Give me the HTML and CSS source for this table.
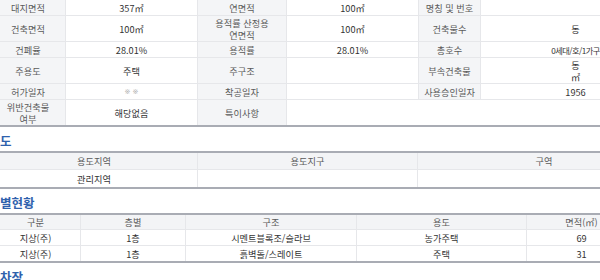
FILE: index.html
```html
<!DOCTYPE html>
<html lang="ko">
<head>
<meta charset="utf-8">
<title>건축물 정보</title>
<link rel="stylesheet" href="styles.css">
</head>
<body>
<div class="page">
  <table class="info">
    <colgroup>
      <col class="c-l1"><col class="c-v1"><col class="c-l2"><col class="c-v2"><col class="c-l3"><col class="c-v3">
    </colgroup>
    <tbody>
      <tr>
        <th>대지면적</th><td>357㎡</td>
        <th>연면적</th><td>100㎡</td>
        <th>명칭 및 번호</th><td></td>
      </tr>
      <tr>
        <th>건축면적</th><td>100㎡</td>
        <th>용적률 산정용<br>연면적</th><td>100㎡</td>
        <th>건축물수</th><td>동</td>
      </tr>
      <tr>
        <th>건폐율</th><td>28.01%</td>
        <th>용적률</th><td>28.01%</td>
        <th>총호수</th><td class="tight">0세대/호/1가구</td>
      </tr>
      <tr>
        <th>주용도</th><td>주택</td>
        <th>주구조</th><td></td>
        <th>부속건축물</th><td>동<br>㎡</td>
      </tr>
      <tr>
        <th>허가일자</th><td class="muted">&#x203B;&#xFE0E; &#x203B;&#xFE0E;</td>
        <th>착공일자</th><td></td>
        <th>사용승인일자</th><td>1956</td>
      </tr>
      <tr>
        <th>위반건축물<br>여부</th><td>해당없음</td>
        <th>특이사항</th><td colspan="3"></td>
      </tr>
    </tbody>
  </table>

  <h3 class="title">도</h3>
  <table class="grid zone">
    <colgroup><col class="z1"><col class="z2"><col class="z3"></colgroup>
    <thead>
      <tr><th>용도지역</th><th>용도지구</th><th>구역</th></tr>
    </thead>
    <tbody>
      <tr><td>관리지역</td><td></td><td></td></tr>
    </tbody>
  </table>

  <h3 class="title">별현황</h3>
  <table class="grid floor">
    <colgroup><col class="f1"><col class="f2"><col class="f3"><col class="f4"><col class="f5"></colgroup>
    <thead>
      <tr><th>구분</th><th>층별</th><th>구조</th><th>용도</th><th>면적(㎡)</th></tr>
    </thead>
    <tbody>
      <tr><td>지상(주)</td><td>1층</td><td>시멘트블록조/슬라브</td><td>농가주택</td><td>69</td></tr>
      <tr><td>지상(주)</td><td>1층</td><td>흙벽돌/스레이트</td><td>주택</td><td>31</td></tr>
    </tbody>
  </table>

  <h3 class="title">차장</h3>
</div>
</body>
</html>
```

FILE: styles.css
```css
html, body {
  margin: 0;
  padding: 0;
  background: #ffffff;
}

body {
  font-family: "Noto Sans CJK KR", "Noto Sans", sans-serif;
  font-size: 9.2px;
  color: #444;
  overflow: hidden;
}

.page {
  margin: -2px 0 0 -10px;
  width: 680px;
}

table {
  border-collapse: collapse;
  table-layout: fixed;
  width: 680px;
}

th, td {
  font-weight: normal;
  text-align: center;
  vertical-align: middle;
  line-height: 12px;
  padding: 1px 2px 0;
  height: 16px;
  box-sizing: border-box;
  border: 1px solid #e6e7ea;
  border-top: 0;
  white-space: nowrap;
}

.info {
  border-top: 2px solid #a9acb4;
  border-bottom: 2px solid #a9acb4;
}

.info th {
  background: #f4f5f7;
  color: #5a5a5a;
}

.info td {
  color: #333;
}

.info td.tight {
  font-size: 8.2px;
  letter-spacing: -0.5px;
}

.info td.muted {
  font-family: "DejaVu Sans", sans-serif;
  color: #b0b0b0;
  font-size: 7px;
}

.c-l1 { width: 75px; }
.c-v1 { width: 132px; }
.c-l2 { width: 89px; }
.c-v2 { width: 132px; }
.c-l3 { width: 62px; }
.c-v3 { width: 190px; }

.title {
  margin: 7px 0 3px 10px;
  font-size: 12.5px;
  line-height: 14px;
  font-weight: bold;
  color: #2f62ad;
}

.grid {
  border-top: 2px solid #a9acb4;
  border-bottom: 2px solid #a9acb4;
}

.grid thead th {
  background: #f3f4f6;
  color: #5a5a5a;
}

.grid td {
  color: #333;
}

.zone th,
.zone td {
  height: 18px;
}

.z1 { width: 207px; }
.z2 { width: 220px; }
.z3 { width: 253px; }

.floor {
  width: 646px;
}

.f1 { width: 90px; }
.f2 { width: 105px; }
.f3 { width: 171px; }
.f4 { width: 170px; }
.f5 { width: 110px; }
```
